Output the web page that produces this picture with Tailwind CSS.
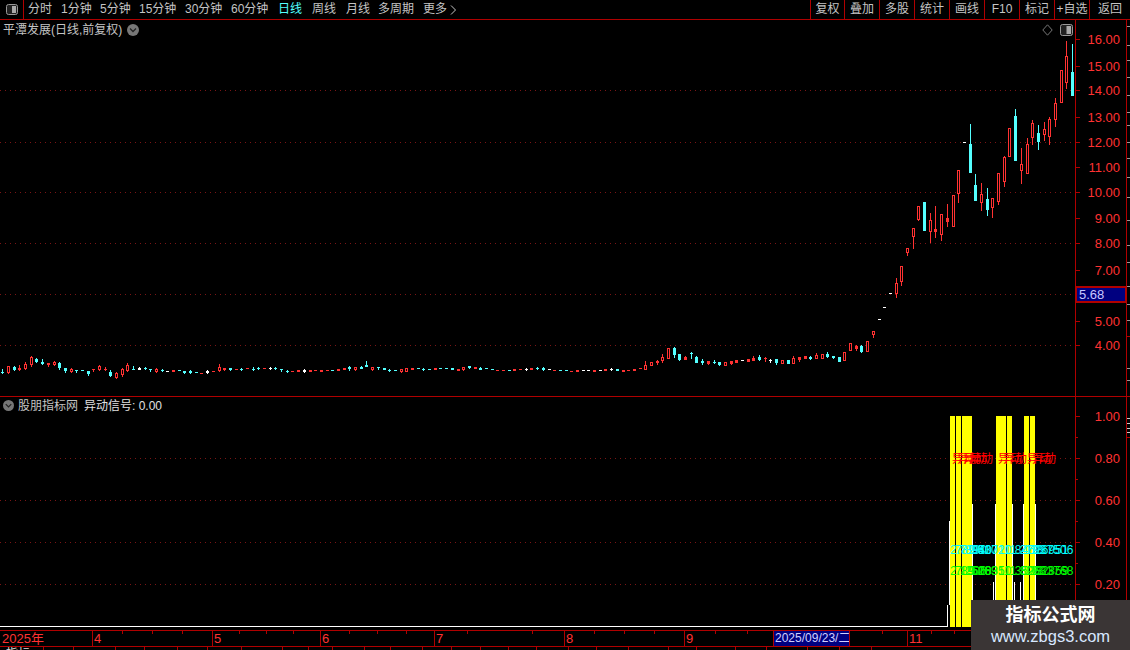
<!DOCTYPE html>
<html lang="zh-CN">
<head>
<meta charset="UTF-8"/>
<title>平潭发展 日线</title>
<script src="https://cdn.jsdelivr.net/npm/@tailwindcss/browser@4"></script>
</head>
<body class="bg-black">
<div class="relative w-[1130px] h-[650px] overflow-hidden bg-black text-[12px] text-[#c4c4c4] font-['Liberation_Sans','Noto_Sans_CJK_SC',sans-serif]">

  <!-- toolbar -->
  <header class="flex h-5 border-b border-[#b00000] leading-[19px]">
    <div class="w-6 flex items-center justify-center border-r border-[#b00000]">
      <svg width="14" height="11" viewBox="0 0 14 11"><rect x="1.5" y="0.5" width="11" height="10" rx="2" fill="#222" stroke="#999"/><rect x="7" y="2" width="4" height="7" fill="#aaa"/></svg>
    </div>
    <nav class="flex pl-1 whitespace-nowrap">
      <span class="w-[33px]">分时</span><span class="w-[39px]">1分钟</span><span class="w-[39px]">5分钟</span><span class="w-[46px]">15分钟</span><span class="w-[46px]">30分钟</span><span class="w-[47px]">60分钟</span>
      <span class="w-[34px] text-[#54ffff]">日线</span><span class="w-[34px]">周线</span><span class="w-[32px]">月线</span><span class="w-[45px]">多周期</span>
      <span class="flex items-center gap-[3px]">更多<svg width="7" height="10" viewBox="0 0 7 10"><path d="M1 .5 5.5 5 1 9.5" fill="none" stroke="#c4c4c4"/></svg></span>
    </nav>
    <div class="ml-auto flex text-center">
      <span class="w-[34px] border-l border-[#b00000]">复权</span>
      <span class="w-[35px] border-l border-[#b00000]">叠加</span>
      <span class="w-[35px] border-l border-[#b00000]">多股</span>
      <span class="w-[35px] border-l border-[#b00000]">统计</span>
      <span class="w-[35px] border-l border-[#b00000]">画线</span>
      <span class="w-[35px] border-l border-[#b00000]">F10</span>
      <span class="w-[35px] border-l border-[#b00000]">标记</span>
      <span class="w-[35px] border-l border-[#b00000]">+自选</span>
      <span class="w-[41px] border-l border-[#b00000]">返回</span>
    </div>
  </header>

  <!-- price panel -->
  <section class="flex h-[377px] border-b border-[#b00000]">
    <div class="relative w-[1075px]">
      <svg id="price" class="absolute inset-0" width="1075" height="376" viewBox="0 20 1075 376" shape-rendering="crispEdges"></svg>
      <div class="relative flex items-center h-[19px] pl-[3px] gap-[5px]">
        <span>平潭发展(日线,前复权)</span>
        <svg width="12" height="12" viewBox="0 0 12 12"><circle cx="6" cy="6" r="6" fill="#777"/><path d="M3 4.5 6 7.5 9 4.5" fill="none" stroke="#222" stroke-width="1.3"/></svg>
      </div>
      <svg class="absolute left-[1042px] top-[4px]" width="11" height="12" viewBox="0 0 11 12"><path d="M5.5 .8 10.2 6 5.5 11.2 .8 6Z" fill="none" stroke="#777"/></svg>
      <svg class="absolute left-[1060px] top-[4px]" width="13" height="12" viewBox="0 0 13 12"><rect x="0.5" y="0.5" width="12" height="11" rx="2" fill="#222" stroke="#999"/><rect x="6.5" y="2" width="4.5" height="8" fill="#aaa"/></svg>
    </div>
    <div class="relative w-[52px] border-x border-[#b00000]">
      <svg id="price-axis" class="absolute inset-0" width="50" height="376" viewBox="1076 20 50 376"></svg>
      <div class="absolute left-[-1px] top-[266px] w-[52px] h-[17px] border-2 border-[#b00000] bg-[#000080] pl-[2px] leading-[13px] text-[13px] text-[#c8c8ff]">5.68</div>
    </div>
    <svg id="strip-a" width="3" height="376" viewBox="0 20 3 376"></svg>
  </section>

  <!-- signal panel -->
  <section class="flex h-[233px]">
    <div class="relative w-[1075px]">
      <svg id="signal" class="absolute inset-0" width="1075" height="233" viewBox="0 397 1075 233"></svg>
      <div class="relative flex items-center h-[17px] pl-[3px] gap-[5px]">
        <svg width="11" height="11" viewBox="0 0 12 12"><circle cx="6" cy="6" r="6" fill="#777"/><path d="M3 4.5 6 7.5 9 4.5" fill="none" stroke="#222" stroke-width="1.3"/></svg>
        <span class="ml-[-1px]">股朋指标网</span>
        <span class="ml-px text-[#e0e0e0]">异动信号: 0.00</span>
      </div>
    </div>
    <div class="relative w-[52px] border-x border-[#b00000]">
      <svg id="signal-axis" class="absolute inset-0" width="50" height="233" viewBox="1076 397 50 233"></svg>
    </div>
    <svg id="strip-b" width="3" height="233" viewBox="0 397 3 233"></svg>
  </section>

  <!-- date axis -->
  <footer class="relative flex h-[17px] border-y border-[#b00000] leading-[15px] text-[13px] text-[#ff3232]">
    <span class="w-[92px] pl-[2px]">2025年</span>
    <span class="w-[120px] pl-px border-l border-[#b00000]">4</span>
    <span class="w-[108px] pl-px border-l border-[#b00000]">5</span>
    <span class="w-[114px] pl-px border-l border-[#b00000]">6</span>
    <span class="w-[130px] pl-px border-l border-[#b00000]">7</span>
    <span class="w-[120px] pl-px border-l border-[#b00000]">8</span>
    <span class="w-[89px] pl-px border-l border-[#b00000]">9</span>
    <span class="w-[77px] pl-px border-x border-[#b00000] bg-[#000080] text-[#d0d0ff] text-[12px] whitespace-nowrap overflow-hidden">2025/09/23/二</span>
    <span class="w-[57px]"></span>
    <span class="w-[60px] pl-px border-l border-[#b00000]">11</span>
    <svg id="minor" class="absolute left-0 top-0" width="1000" height="3"></svg>
  </footer>

  <!-- clipped row under the date axis -->
  <div class="relative h-[3px] overflow-hidden leading-[14px] text-[#ddd]">
    <span class="pl-[6px]">指标</span>
    <svg id="cells" class="absolute left-0 top-0" width="1130" height="3"></svg>
  </div>

  <!-- watermark -->
  <div class="absolute left-[971px] top-[600px] w-[159px] h-[50px] bg-[#3a3535] text-center">
    <p class="mt-[4px] text-[18px] leading-[22px] font-bold text-white">指标公式网</p>
    <p class="text-[16.5px] leading-[20px] text-[#d8e8ff]">www.zbgs3.com</p>
  </div>
</div>

<script>
const RED='#ff3232', CYAN='#54ffff', FRAME='#b00000', DOT='#7a1515';
const q=s=>document.querySelector(s);

const rect=(x,y,w,h,c)=>`<rect x="${x}" y="${y}" width="${w}" height="${h}" fill="${c}"/>`;
const dots=(y,x2=1075)=>`<line x1="0" x2="${x2}" y1="${y+.5}" y2="${y+.5}" stroke="${DOT}" stroke-dasharray="1 4"/>`;
const label=(x,y,t,c,size=13,anchor='start')=>`<text x="${x}" y="${y}" fill="${c}" font-size="${size}" text-anchor="${anchor}">${t}</text>`;

/* type,high,top,bottom,low in page pixels; c=down r=up hollow f=up filled w=doji */
const CANDLES=`c,369,372,372,373;r,366,366,372,373;c,366,367,369,370;f,365,368,369,370;r,362,364,368,369;r,356,357,364,366;c,358,359,361,362;c,359,362,363,364;f,363,363,364,366;r,361,362,364,365;c,362,363,367,369;c,368,368,370,372;r,368,369,371,372;c,370,370,370,372;c,370,370,370,370;c,371,371,373,375;f,369,369,369,371;r,365,366,369,370;f,367,369,369,370;c,370,372,375,376;r,372,373,377,378;r,368,369,374,376;r,363,365,370,371;c,366,369,369,369;w,367,368,369,369;c,367,368,368,369;c,369,369,369,371;r,368,369,371,372;c,369,370,370,371;w,371,371,371,371;f,370,370,371,371;c,370,370,370,370;c,371,371,372,373;c,370,371,372,373;c,372,372,372,372;f,373,373,373,373;w,370,371,372,373;f,371,371,371,371;r,364,367,370,371;f,368,368,369,370;c,368,368,369,370;f,369,369,369,369;c,368,369,369,370;f,368,368,368,368;c,367,369,369,370;c,367,368,368,369;f,368,368,368,368;w,367,368,368,369;c,367,368,368,369;c,369,369,369,371;c,370,371,371,372;f,371,371,371,371;f,370,370,371,371;
w,369,370,371,372;f,370,370,371,371;f,370,370,370,370;f,370,370,371,371;f,370,370,370,370;c,370,370,370,370;f,369,369,370,370;f,368,368,369,369;c,366,367,368,370;r,367,367,369,370;c,366,367,368,368;c,361,365,366,366;r,367,367,369,370;c,367,367,367,369;c,368,368,369,369;c,369,370,370,371;c,370,370,370,370;r,369,369,371,372;r,368,368,371,371;f,368,368,369,369;c,368,368,368,368;c,368,369,369,370;c,369,369,369,369;f,368,368,369,369;c,368,368,368,368;c,368,368,368,368;c,368,368,369,369;f,369,369,370,370;r,367,367,369,370;
c,366,366,367,368;f,367,367,368,368;c,367,368,369,369;c,368,368,368,368;c,369,369,369,369;f,370,370,370,370;f,370,370,370,370;c,370,370,370,370;f,369,369,370,370;f,369,369,369,369;w,368,369,369,370;f,368,368,369,369;c,367,368,368,369;c,367,368,369,370;w,369,369,369,369;f,370,370,370,370;c,370,370,370,370;c,370,370,370,370;f,371,371,371,371;f,370,370,371,371;w,370,370,370,370;w,370,370,370,370;f,370,370,371,371;w,370,370,370,370;f,369,369,370,370;w,368,369,369,370;c,369,369,370,370;f,370,370,371,371;
f,370,370,370,370;f,369,369,370,370;f,368,368,368,368;r,361,365,369,369;r,362,362,365,365;f,360,361,362,364;r,354,357,360,362;r,348,348,358,358;c,347,348,354,357;c,354,354,359,360;f,356,357,359,359;c,352,353,353,358;c,356,357,362,362;c,359,361,362,364;f,361,361,363,364;c,360,362,362,363;c,362,362,364,365;r,362,362,365,365;f,361,361,363,364;f,360,360,362,362;w,360,360,360,360;f,359,359,361,361;f,356,358,360,360;c,355,357,359,360;f,357,358,358,361;w,359,360,360,362;c,359,359,362,364;r,360,360,363,363;c,360,360,363,363;r,356,358,363,363;f,357,357,359,361;f,356,356,358,358;c,356,357,358,359;r,353,355,358,358;r,354,354,358,358;c,352,354,356,357;c,356,356,357,358;c,357,357,361,361;r,352,352,360,360;r,343,343,350,350;f,345,346,348,350;c,345,346,351,352;r,341,341,351,351;r,331,331,334,337;
w,319,319,319,319;w,307,307,307,307;w,293,293,293,293;r,278,283,293,297;r,266,266,281,285;r,248,248,252,255;r,228,228,236,248;r,206,206,219,220;c,202,202,230,230;r,213,220,231,242;f,206,229,231,237;r,214,214,234,240;f,204,218,221,226;r,195,195,226,226;r,170,170,193,202;w,142,142,142,142;c,124,144,172,172;c,174,185,200,200;r,183,194,202,210;c,188,199,209,215;r,198,198,207,217;r,173,173,201,204;r,156,157,181,186;r,128,128,156,156;c,109,116,160,160;r,148,164,170,183;r,138,144,173,173;r,120,123,137,144;c,125,133,141,149;r,122,129,134,140;r,117,119,136,144;r,98,103,119,126;r,70,70,102,102;r,41,56,82,88;c,44,72,95,95`;

function candle(row,i){
  const [t,hi,top,bot,lo]=row.trim().split(',');
  const [h,a,b,l]=[hi,top,bot,lo].map(Number);
  const x=Math.round(2.3+5.69*i);
  const c=t==='c'?CYAN:t==='w'?'#fff':RED;
  let s=rect(x,h,1,l-h+1,c);
  if(t==='r'&&b-a>1) s+=rect(x-1,a,3,b-a+1,RED)+rect(x,a+1,1,b-a-1,'#000');
  else s+=rect(x-1,a,3,b-a+1,c);
  return s;
}

let price='';
[90,142,192,243,294,345].forEach(y=>price+=dots(y));
CANDLES.split(';').forEach((r,i)=>price+=candle(r,i));
q('#price').innerHTML=price;

let pa='';
[['16.00',39],['15.00',66],['14.00',90],['13.00',117],['12.00',142],['11.00',167],['10.00',192],['9.00',218],['8.00',243],['7.00',270],['5.00',321],['4.00',345]].forEach(([t,y])=>{
  pa+=rect(1076,y,4,1,FRAME)+label(1120,y+5,t,RED,13,'end');
});
q('#price-axis').innerHTML=pa;

/* signal panel */
let sig='';
[458,500,542,584].forEach(y=>sig+=dots(y));
sig+=rect(0,626,948,1,'#fff')+rect(947,605,1,21,'#fff')+rect(949,521,1,84,'#fff');
[[972,504],[995,504],[1012,504],[1023,504],[1035,504]].forEach(([x,y])=>sig+=rect(x,y,1,96,'#fff'));
[993,1014,1020].forEach(x=>sig+=rect(x,582,1,20,'#fff'));
[[950,22],[996,16],[1024,11]].forEach(([x,w])=>sig+=rect(x,416,w,211,'#ffff00'));
[955,961,1006,1029].forEach(x=>sig+=rect(x,416,1,211,'#000'));
[952,957,963,969,998,1003,1027,1032].forEach(x=>sig+=label(x,463,'异动','#ff0000',12));
[[950,'2.7190'],[955,'7.8040'],[961,'8.9510'],[968,'9.3372'],[998,'10.8452'],[1004,'11.2793'],[1025,'12.6951'],[1030,'13.7506']].forEach(([x,t])=>sig+=label(x,554,t,'#00ffff',12));
[[950,'2.1906'],[955,'7.2608'],[961,'8.5269'],[968,'9.1035'],[998,'10.3528'],[1004,'11.8963'],[1025,'12.2859'],[1030,'13.3768']].forEach(([x,t])=>sig+=label(x,575,t,'#00ff00',12));
q('#signal').innerHTML=sig;

let sa='';
[416,437,458,479,500,521,542,563,584,605].forEach((y,i)=>{
  sa+=rect(1076,y,i%2?2:4,1,FRAME);
  if(i%2===0) sa+=label(1120,y+5,(1-i/10).toFixed(2),RED,13,'end');
});
q('#signal-axis').innerHTML=sa;

/* far right strip of ticks */
q('#strip-a').innerHTML=[26,45,60,77,95,112,125,142,158,177,197,220,245,262,286,304,320,336,368,380].map(y=>rect(0,y,3,1,'#999')).join('')+rect(0,336,3,1,FRAME);
q('#strip-b').innerHTML=[418,423,428,432].map(y=>rect(0,y,3,1,'#ccc')).join('')+rect(0,437,3,1,FRAME);

q('#minor').innerHTML=[122,152,182,239,266,293,349,377,406,467,532,594,624,654,715,747,882,931,954].map(x=>rect(x,0,1,3,FRAME)).join('');
q('#cells').innerHTML=[43,73,115,144,177,207,241,282,308,332,364,390,422,451,480,508,536,568,596,628,668,696,735,766,807,839,871].map(x=>rect(x,0,1,3,FRAME)).join('');
</script>
</body>
</html>
